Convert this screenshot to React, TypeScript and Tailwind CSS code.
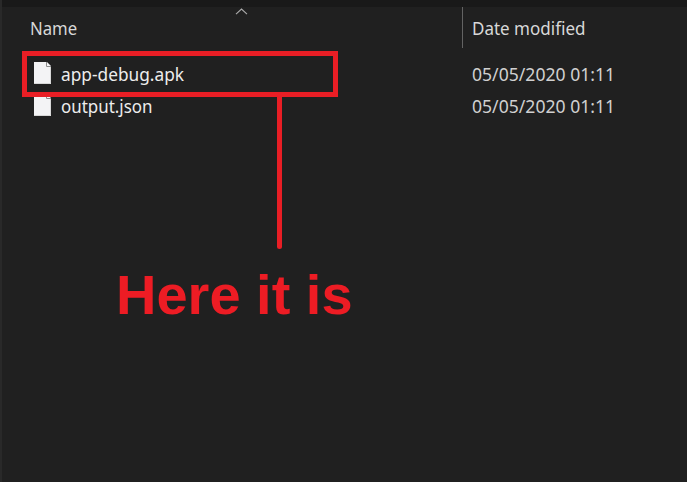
type FileEntry = { name: string; modified: string; fit: string };

const files: FileEntry[] = [
  { name: "app-debug.apk", modified: "05/05/2020 01:11", fit: "scale-x-[0.96]" },
  { name: "output.json", modified: "05/05/2020 01:11", fit: "scale-x-[0.94]" },
];

function FileIcon() {
  return (
    <svg className="h-[22px] w-[17px] shrink-0" viewBox="0 0 17 22" fill="none">
      <path d="M0 0H13L17 4V22H0Z" fill="#f3f3f5" />
      <path d="M12.5 0V4.5H17" stroke="#8c8c8c" strokeWidth="1" />
      <path d="M0 21.5H16.5V5" stroke="#cfcfcf" strokeWidth=".8" />
    </svg>
  );
}

export default function App() {
  return (
    <div className="relative h-[482px] w-[687px] overflow-hidden border-l-2 border-[#292929] bg-[#202020] font-['Noto_Sans','Open_Sans',sans-serif] text-[18px] leading-[32px]">
      <div className="h-[7px] bg-[#191919]" />
      <header className="flex h-[41px] text-[#d8d8d8]">
        <div className="relative w-[461px] border-r border-[#636363] pl-[28px] pt-[5px]">
          <span className="inline-block origin-left scale-x-[0.93]">Name</span>
          <svg className="absolute left-[233px] top-[1px] h-[7px] w-[13px]" viewBox="0 0 13 7" fill="none">
            <path d="M1 6.2L6.5 1L12 6.2" stroke="#ababab" strokeWidth="1.1" />
          </svg>
        </div>
        <div className="pl-[9px] pt-[5px]">
          <span className="inline-block origin-left scale-x-[0.945]">Date modified</span>
        </div>
      </header>
      <main className="pt-[10px]">
        {files.map((file) => (
          <div key={file.name} className="flex h-8 whitespace-nowrap">
            <div className="flex w-[460px] gap-[10px] pl-[32px] pt-[4px] text-[#ededed]">
              <FileIcon />
              <span className={`-mt-[4px] inline-block origin-left ${file.fit}`}>{file.name}</span>
            </div>
            <span className="ml-[10px] inline-block origin-left scale-x-[0.977] text-[#d0d0d0]">{file.modified}</span>
          </div>
        ))}
      </main>
      <div className="absolute left-[20px] top-[51px] h-[46px] w-[316px] border-[5px] border-[#e91e25]" />
      <div className="absolute left-[275px] top-[94px] h-[155px] w-[5px] rounded-b-full bg-[#e91e25]" />
      <div className="absolute left-[114px] top-[263px] whitespace-nowrap font-['Liberation_Sans',sans-serif] text-[56px] font-bold leading-[64px] text-[#ed1c24]">
        Here it is
      </div>
    </div>
  );
}
